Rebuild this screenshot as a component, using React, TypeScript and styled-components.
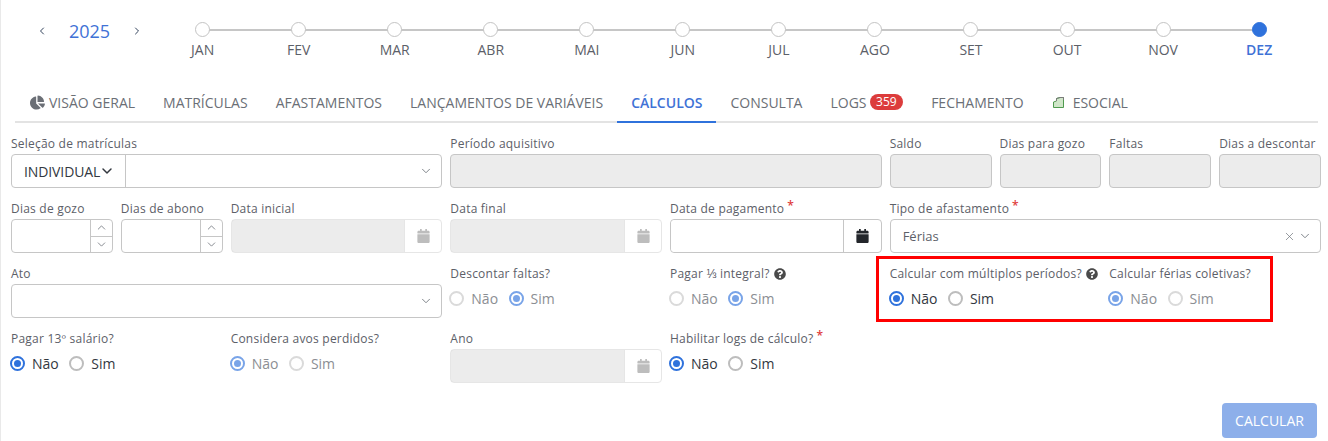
import React from 'react';
import styled, { createGlobalStyle } from 'styled-components';
import { FaCalendar, FaChartPie, FaQuestionCircle } from 'react-icons/fa';
import { ChevronDown, ChevronLeft, ChevronRight, ChevronUp, X } from 'lucide-react';

const GlobalStyle = createGlobalStyle`
	html, body {
		margin: 0;
		padding: 0;
		background: #fff;
	}
	body {
		font-family: 'Open Sans', 'Liberation Sans', sans-serif;
		color: #5c6068;
	}
	* {
		box-sizing: border-box;
	}
`;

const Page = styled.div`
	position: relative;
	width: 1328px;
	height: 441px;
	overflow: hidden;
	border-left: 1px solid #e9e9e9;
`;

const Timeline = styled.div`
	display: flex;
	height: 85px;
	padding-top: 22px;
`;

const YearPicker = styled.div`
	width: 153.6px;
	height: 18px;
	display: flex;
	align-items: center;
	padding-left: 35px;
	color: #33435c;
`;

const Year = styled.span`
	width: 83px;
	text-align: center;
	font-size: 18px;
	line-height: 18px;
	color: #3f72d6;
`;

const Month = styled.div<{ $first?: boolean }>`
	position: relative;
	width: 96.05px;
	display: flex;
	flex-direction: column;
	align-items: center;
	row-gap: 3px;
	font-size: 14px;
	line-height: 20px;
	&::before {
		content: '';
		display: ${(props) => (props.$first ? 'none' : 'block')};
		position: absolute;
		top: 7px;
		right: 50%;
		width: 100%;
		height: 2px;
		background: #c6c6c6;
	}
`;

const Dot = styled.span<{ $active?: boolean }>`
	position: relative;
	z-index: 1;
	width: 15px;
	height: 15px;
	border-radius: 50%;
	border: 1px solid ${(props) => (props.$active ? '#2f72dc' : '#c4c4c4')};
	background: ${(props) => (props.$active ? '#2f72dc' : '#fff')};
`;

const MonthName = styled.span<{ $active?: boolean }>`
	color: ${(props) => (props.$active ? '#3f72d6' : '#5c6068')};
	font-weight: ${(props) => (props.$active ? 600 : 400)};
`;

const TabBar = styled.div`
	display: flex;
	height: 38px;
	margin: 0 10px 0 14px;
	padding-left: 1px;
	border-bottom: 2px solid #e3e3e3;
`;

const Tab = styled.div<{ $active?: boolean }>`
	display: flex;
	align-items: center;
	column-gap: 4px;
	height: 38px;
	padding: 0 14px 2px;
	font-size: 14px;
	white-space: nowrap;
	color: ${(props) => (props.$active ? '#3f72d6' : '#6b6f76')};
	font-weight: ${(props) => (props.$active ? 600 : 400)};
	border-bottom: 2px solid ${(props) => (props.$active ? '#2f72dc' : 'transparent')};
`;

const Badge = styled.span`
	background: #dc3c3c;
	color: #fff;
	border-radius: 8px;
	font-size: 12px;
	line-height: 16px;
	padding: 0 6.5px;
	margin-left: -1px;
`;

const EsocialMark = styled.svg`
	margin: 0 5px 0 1px;
`;

const Form = styled.div`
	display: grid;
	grid-template-columns: repeat(12, 1fr);
	column-gap: 8px;
	row-gap: 11px;
	padding: 11px 7px 0 10px;
`;

const Field = styled.div<{ $span: number }>`
	grid-column: span ${(props) => props.$span};
	min-width: 0;
`;

const Label = styled.label`
	display: flex;
	align-items: flex-start;
	column-gap: 3px;
	height: 20px;
	font-size: 12px;
	line-height: 20px;
	font-weight: 500;
	letter-spacing: 0.22px;
	white-space: nowrap;
	color: #5c6068;
`;

const Required = styled.span`
	color: #e03c3c;
	font-size: 12px;
	line-height: 14px;
	font-weight: 600;
`;

const HelpIcon = styled(FaQuestionCircle)`
	width: 12px;
	height: 12px;
	margin: 4px 0 0 1px;
	color: #4a4a4a;
`;

const Box = styled.div<{ $disabled?: boolean }>`
	display: flex;
	align-items: center;
	height: 34px;
	border: 1px solid #c6c6c6;
	border-radius: 4px;
	overflow: hidden;
	background: ${(props) => (props.$disabled ? '#ececec' : '#fff')};
`;

const SelectValue = styled.span`
	flex: 1;
	padding-left: 12px;
	font-size: 13px;
	color: #5c6068;
`;

const SelectPrefix = styled.div`
	display: flex;
	align-items: center;
	width: 114px;
	height: 100%;
	padding-left: 12px;
	border-right: 1px solid #c6c6c6;
	font-size: 14px;
	letter-spacing: -0.1px;
	color: #33383f;
	svg {
		margin-left: -1px;
	}
`;

const SelectIcons = styled.div`
	display: flex;
	align-items: center;
	column-gap: 2px;
	padding-right: 8px;
	margin-left: auto;
	color: #6e737a;
`;

const Stepper = styled.div`
	display: flex;
	flex-direction: column;
	width: 22px;
	height: 100%;
	margin-left: auto;
	border-left: 1px solid #c6c6c6;
`;

const StepButton = styled.div<{ $last?: boolean }>`
	flex: 1;
	display: flex;
	align-items: center;
	justify-content: center;
	color: #6e737a;
	border-top: ${(props) => (props.$last ? '1px solid #c6c6c6' : 'none')};
`;

const DateInput = styled.div<{ $disabled?: boolean }>`
	display: flex;
	height: 34px;
	border: 1px solid ${(props) => (props.$disabled ? '#e6e6e6' : '#c6c6c6')};
	border-radius: 4px;
	overflow: hidden;
`;

const DateValue = styled.div<{ $disabled?: boolean }>`
	flex: 1;
	margin: ${(props) => (props.$disabled ? '-1px 0 -1px -1px' : '0')};
	background: ${(props) => (props.$disabled ? '#ececec' : '#fff')};
	border: ${(props) => (props.$disabled ? '1px solid #c6c6c6' : 'none')};
	border-right: none;
	border-radius: 4px 0 0 4px;
`;

const DateButton = styled.div<{ $disabled?: boolean }>`
	display: flex;
	align-items: center;
	justify-content: center;
	width: ${(props) => (props.$disabled ? '37px' : '38px')};
	border-left: 1px solid ${(props) => (props.$disabled ? '#e6e6e6' : '#c6c6c6')};
	color: ${(props) => (props.$disabled ? '#bdbdbd' : '#23262b')};
	svg {
		width: 13px;
		height: 14px;
	}
`;

const RadioRow = styled.div`
	display: flex;
	align-items: center;
	column-gap: 10.5px;
	height: 34px;
	margin: -3px 0 0 -1px;
`;

const RadioOption = styled.span<{ $disabled?: boolean }>`
	display: flex;
	align-items: center;
	column-gap: 7px;
	font-size: 14px;
	color: ${(props) => (props.$disabled ? '#8b8e93' : '#33383f')};
`;

const RadioMark = styled.span<{ $checked?: boolean; $disabled?: boolean }>`
	display: flex;
	align-items: center;
	justify-content: center;
	width: 15px;
	height: 15px;
	border-radius: 50%;
	border: 2px solid
		${(props) => {
			if (props.$checked) return props.$disabled ? '#79a4e8' : '#2f72dc';
			return props.$disabled ? '#dadada' : '#bdbdbd';
		}};
	&::after {
		content: '';
		display: ${(props) => (props.$checked ? 'block' : 'none')};
		width: 7px;
		height: 7px;
		border-radius: 50%;
		background: ${(props) => (props.$disabled ? '#79a4e8' : '#2f72dc')};
	}
`;

const Footer = styled.div`
	display: flex;
	justify-content: flex-end;
	padding: 20px 11px 0 0;
`;

const SubmitButton = styled.button`
	width: 95px;
	height: 35px;
	border: none;
	border-radius: 4px;
	background: #8dafea;
	color: #fff;
	font-family: inherit;
	font-size: 14px;
`;

const Highlight = styled.div`
	position: absolute;
	left: 875px;
	top: 256px;
	width: 397px;
	height: 66px;
	border: 3px solid #f00;
	pointer-events: none;
`;

const months = ['JAN', 'FEV', 'MAR', 'ABR', 'MAI', 'JUN', 'JUL', 'AGO', 'SET', 'OUT', 'NOV', 'DEZ'];

const EsocialIcon = () => (
	<EsocialMark width="11" height="11" viewBox="0 0 11 11">
		<path d="M0.5 10.5V5L3.5 4V1.5L7 0.5H10.5V10.5Z" fill="#cfe6c8" stroke="#4f9a4f" />
		<path d="M3.5 4V1.5L7 0.5H10.5V3" fill="none" stroke="#7a7a7a" />
	</EsocialMark>
);

const Radios = ({ value, disabled }: { value: 'Não' | 'Sim'; disabled?: boolean }) => (
	<RadioRow>
		{['Não', 'Sim'].map((option) => (
			<RadioOption key={option} $disabled={disabled}>
				<RadioMark $checked={option === value} $disabled={disabled} />
				{option}
			</RadioOption>
		))}
	</RadioRow>
);

const DateField = ({ disabled }: { disabled?: boolean }) => (
	<DateInput $disabled={disabled}>
		<DateValue $disabled={disabled} />
		<DateButton $disabled={disabled}>
			<FaCalendar />
		</DateButton>
	</DateInput>
);

const NumberField = () => (
	<Box>
		<Stepper>
			<StepButton>
				<ChevronUp size={13} strokeWidth={1.5} />
			</StepButton>
			<StepButton $last>
				<ChevronDown size={13} strokeWidth={1.5} />
			</StepButton>
		</Stepper>
	</Box>
);

const App = () => (
	<Page>
		<GlobalStyle />
		<Timeline>
			<YearPicker>
				<ChevronLeft size={12} strokeWidth={2} />
				<Year>2025</Year>
				<ChevronRight size={12} strokeWidth={2} />
			</YearPicker>
			{months.map((month, index) => (
				<Month key={month} $first={index === 0}>
					<Dot $active={month === 'DEZ'} />
					<MonthName $active={month === 'DEZ'}>{month}</MonthName>
				</Month>
			))}
		</Timeline>
		<TabBar>
			<Tab>
				<FaChartPie size={15} color="#6b6f76" />
				VISÃO GERAL
			</Tab>
			<Tab>MATRÍCULAS</Tab>
			<Tab>AFASTAMENTOS</Tab>
			<Tab>LANÇAMENTOS DE VARIÁVEIS</Tab>
			<Tab $active>CÁLCULOS</Tab>
			<Tab>CONSULTA</Tab>
			<Tab>
				LOGS
				<Badge>359</Badge>
			</Tab>
			<Tab>FECHAMENTO</Tab>
			<Tab>
				<EsocialIcon />
				ESOCIAL
			</Tab>
		</TabBar>
		<Form>
			<Field $span={4}>
				<Label>Seleção de matrículas</Label>
				<Box>
					<SelectPrefix>
						INDIVIDUAL
						<ChevronDown size={16} strokeWidth={2.2} />
					</SelectPrefix>
					<SelectIcons>
						<ChevronDown size={14} strokeWidth={1.5} />
					</SelectIcons>
				</Box>
			</Field>
			<Field $span={4}>
				<Label>Período aquisitivo</Label>
				<Box $disabled />
			</Field>
			<Field $span={1}>
				<Label>Saldo</Label>
				<Box $disabled />
			</Field>
			<Field $span={1}>
				<Label>Dias para gozo</Label>
				<Box $disabled />
			</Field>
			<Field $span={1}>
				<Label>Faltas</Label>
				<Box $disabled />
			</Field>
			<Field $span={1}>
				<Label>Dias a descontar</Label>
				<Box $disabled />
			</Field>

			<Field $span={1}>
				<Label>Dias de gozo</Label>
				<NumberField />
			</Field>
			<Field $span={1}>
				<Label>Dias de abono</Label>
				<NumberField />
			</Field>
			<Field $span={2}>
				<Label>Data inicial</Label>
				<DateField disabled />
			</Field>
			<Field $span={2}>
				<Label>Data final</Label>
				<DateField disabled />
			</Field>
			<Field $span={2}>
				<Label>
					Data de pagamento<Required>*</Required>
				</Label>
				<DateField />
			</Field>
			<Field $span={4}>
				<Label>
					Tipo de afastamento<Required>*</Required>
				</Label>
				<Box>
					<SelectValue>Férias</SelectValue>
					<SelectIcons>
						<X size={13} strokeWidth={1.3} />
						<ChevronDown size={14} strokeWidth={1.5} />
					</SelectIcons>
				</Box>
			</Field>

			<Field $span={4}>
				<Label>Ato</Label>
				<Box>
					<SelectIcons>
						<ChevronDown size={14} strokeWidth={1.5} />
					</SelectIcons>
				</Box>
			</Field>
			<Field $span={2}>
				<Label>Descontar faltas?</Label>
				<Radios value="Sim" disabled />
			</Field>
			<Field $span={2}>
				<Label>
					Pagar ⅓ integral?
					<HelpIcon />
				</Label>
				<Radios value="Sim" disabled />
			</Field>
			<Field $span={2}>
				<Label>
					Calcular com múltiplos períodos?
					<HelpIcon />
				</Label>
				<Radios value="Não" />
			</Field>
			<Field $span={2}>
				<Label>Calcular férias coletivas?</Label>
				<Radios value="Não" disabled />
			</Field>

			<Field $span={2}>
				<Label>Pagar 13º salário?</Label>
				<Radios value="Não" />
			</Field>
			<Field $span={2}>
				<Label>Considera avos perdidos?</Label>
				<Radios value="Não" disabled />
			</Field>
			<Field $span={2}>
				<Label>Ano</Label>
				<DateField disabled />
			</Field>
			<Field $span={2}>
				<Label>
					Habilitar logs de cálculo?<Required>*</Required>
				</Label>
				<Radios value="Não" />
			</Field>
		</Form>
		<Footer>
			<SubmitButton>CALCULAR</SubmitButton>
		</Footer>
		<Highlight />
	</Page>
);

export default App;
